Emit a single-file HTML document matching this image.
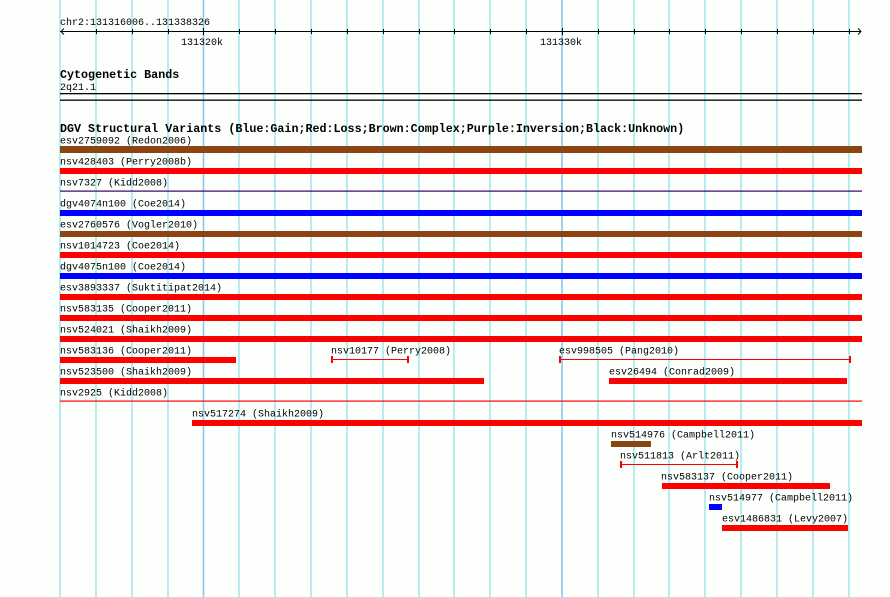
<!DOCTYPE html>
<html><head><meta charset="utf-8"><style>
html,body{margin:0;padding:0;background:#fcfffc;}
svg{display:block}
text{font-family:"Liberation Mono","DejaVu Sans Mono",monospace;font-size:10px;fill:#000}
.b{font-weight:bold;font-size:11.7px}
</style></head><body>
<svg width="890" height="597" xmlns="http://www.w3.org/2000/svg">
<rect width="890" height="597" fill="#fcfffc"/>
<g stroke="#a6e8ec" stroke-width="1.6">
<line x1="60" y1="0" x2="60" y2="597"/><line x1="96" y1="0" x2="96" y2="597"/><line x1="132" y1="0" x2="132" y2="597"/><line x1="168" y1="0" x2="168" y2="597"/>
<line x1="239" y1="0" x2="239" y2="597"/><line x1="275" y1="0" x2="275" y2="597"/><line x1="311" y1="0" x2="311" y2="597"/><line x1="347" y1="0" x2="347" y2="597"/>
<line x1="383" y1="0" x2="383" y2="597"/><line x1="419" y1="0" x2="419" y2="597"/><line x1="454" y1="0" x2="454" y2="597"/><line x1="490" y1="0" x2="490" y2="597"/>
<line x1="526" y1="0" x2="526" y2="597"/><line x1="598" y1="0" x2="598" y2="597"/><line x1="634" y1="0" x2="634" y2="597"/><line x1="669" y1="0" x2="669" y2="597"/>
<line x1="705" y1="0" x2="705" y2="597"/><line x1="741" y1="0" x2="741" y2="597"/><line x1="777" y1="0" x2="777" y2="597"/><line x1="813" y1="0" x2="813" y2="597"/><line x1="849" y1="0" x2="849" y2="597"/>
</g>
<g stroke="#88c8ec" stroke-width="1.6"><line x1="203.5" y1="0" x2="203.5" y2="597"/><line x1="562" y1="0" x2="562" y2="597"/></g>
<text x="60" y="25">chr2:131316006..131338326</text>
<g stroke="#000" stroke-width="1">
<line x1="60" y1="31.5" x2="861" y2="31.5"/>
<path d="M64 28.5 L61 31.5 L64 34.5 M858 28.5 L861 31.5 L858 34.5" fill="none"/>
<path d="M96.5 29v5M132.5 29v5M168.5 29v5M203.5 28v7M239.5 29v5M275.5 29v5M311.5 29v5M347.5 29v5M383.5 29v5M419.5 29v5M454.5 29v5M490.5 29v5M526.5 29v5M562.5 28v7M598.5 29v5M634.5 29v5M669.5 29v5M705.5 29v5M741.5 29v5M777.5 29v5M813.5 29v5M849.5 29v5"/>
</g>
<text x="181" y="45">131320k</text>
<text x="540" y="45">131330k</text>
<text x="60" y="78" class="b">Cytogenetic Bands</text>
<text x="60" y="90">2q21.1</text>
<rect x="60" y="93" width="802" height="1.3" fill="#000"/>
<rect x="60" y="99.5" width="802" height="1.3" fill="#000"/>
<text x="60" y="132" class="b">DGV Structural Variants (Blue:Gain;Red:Loss;Brown:Complex;Purple:Inversion;Black:Unknown)</text>

<text x="60" y="143.5">esv2759092 (Redon2006)</text><rect x="60" y="146" width="802" height="7" fill="#8b4513"/>
<text x="60" y="164.5">nsv428403 (Perry2008b)</text><rect x="60" y="168" width="802" height="6" fill="#f00"/>
<text x="60" y="185.5">nsv7327 (Kidd2008)</text><rect x="60" y="190.5" width="802" height="1.2" fill="#330066"/>
<text x="60" y="206.5">dgv4074n100 (Coe2014)</text><rect x="60" y="210" width="802" height="6" fill="#00f"/>
<text x="60" y="227.5">esv2760576 (Vogler2010)</text><rect x="60" y="231" width="802" height="6" fill="#8b4513"/>
<text x="60" y="248.5">nsv1014723 (Coe2014)</text><rect x="60" y="252" width="802" height="6" fill="#f00"/>
<text x="60" y="269.5">dgv4075n100 (Coe2014)</text><rect x="60" y="273" width="802" height="6" fill="#00f"/>
<text x="60" y="290.5">esv3893337 (Suktitipat2014)</text><rect x="60" y="294" width="802" height="6" fill="#f00"/>
<text x="60" y="311.5">nsv583135 (Cooper2011)</text><rect x="60" y="315" width="802" height="6" fill="#f00"/>
<text x="60" y="332.5">nsv524021 (Shaikh2009)</text><rect x="60" y="336" width="802" height="6" fill="#f00"/>

<text x="60" y="353.5">nsv583136 (Cooper2011)</text><rect x="60" y="357" width="176" height="6" fill="#f00"/>
<text x="331" y="353.5">nsv10177 (Perry2008)</text>
<g fill="#f00"><rect x="332" y="359" width="76" height="1"/><rect x="331" y="356" width="2" height="7"/><rect x="407" y="356" width="2" height="7"/></g>
<text x="559" y="353.5">esv998505 (Pang2010)</text>
<g fill="#f00"><rect x="560" y="359" width="291" height="1"/><rect x="559" y="356" width="2" height="7"/><rect x="849" y="356" width="2" height="7"/></g>

<text x="60" y="374.5">nsv523500 (Shaikh2009)</text><rect x="60" y="378" width="424" height="6" fill="#f00"/>
<text x="609" y="374.5">esv26494 (Conrad2009)</text><rect x="609" y="378" width="238" height="6" fill="#f00"/>
<text x="60" y="395.5">nsv2925 (Kidd2008)</text><rect x="60" y="400.5" width="802" height="1.2" fill="#f00"/>
<text x="192" y="416.5">nsv517274 (Shaikh2009)</text><rect x="192" y="420" width="670" height="6" fill="#f00"/>
<text x="611" y="437.5">nsv514976 (Campbell2011)</text><rect x="611" y="441" width="40" height="6" fill="#8b4513"/>
<text x="620" y="458.5">nsv511813 (Arlt2011)</text>
<g fill="#f00"><rect x="621" y="464" width="116" height="1"/><rect x="620" y="461" width="2" height="7"/><rect x="736" y="461" width="2" height="7"/></g>
<text x="661" y="479.5">nsv583137 (Cooper2011)</text><rect x="662" y="483" width="168" height="6" fill="#f00"/>
<text x="709" y="500.5">nsv514977 (Campbell2011)</text><rect x="709" y="504" width="13" height="6" fill="#00f"/>
<text x="722" y="521.5">esv1486831 (Levy2007)</text><rect x="722" y="525" width="126" height="6" fill="#f00"/>
</svg>
</body></html>
